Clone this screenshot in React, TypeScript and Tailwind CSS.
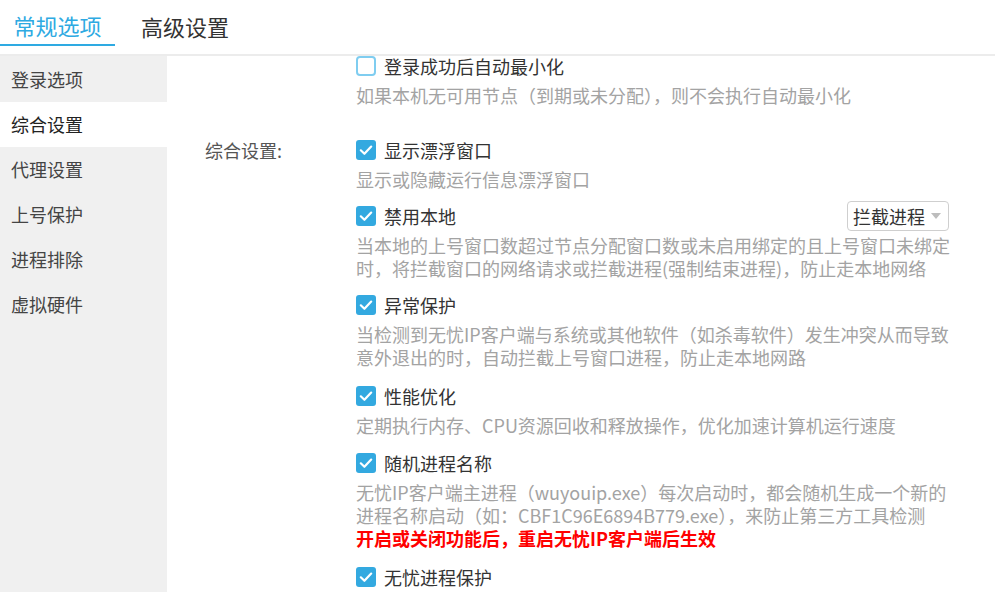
import React from "react";

const FONT = { fontFamily: '"Noto Sans CJK SC", "Noto Sans", sans-serif' };

function Check({ checked }: { checked: boolean }) {
  if (!checked) {
    return (
      <div className="w-[20px] h-[20px] shrink-0 rounded-[4px] border-2 border-[#7fcdf0] bg-white" />
    );
  }
  return (
    <div className="w-[20px] h-[20px] shrink-0 rounded-[3px] bg-[#33a9e0] flex items-center justify-center">
      <svg width="20" height="20" viewBox="0 0 20 20">
        <polyline
          points="4.8,10.3 8.4,13.8 15.2,6.6"
          fill="none"
          stroke="#ffffff"
          strokeWidth="2.2"
          strokeLinecap="round"
          strokeLinejoin="round"
        />
      </svg>
    </div>
  );
}

type Item = {
  title: string;
  checked: boolean;
  desc: React.ReactNode[];
  dropdown?: boolean;
  mb?: string;
};

function Option({ item }: { item: Item }) {
  return (
    <div className={item.mb ?? "mb-[11px]"}>
      <div className="h-[28px] flex items-center">
        <Check checked={item.checked} />
        <span className="ml-[8px] text-[18px] text-[#333] leading-none">{item.title}</span>
        {item.dropdown && (
          <div className="ml-auto mr-[1px] h-[30px] w-[102px] shrink-0 rounded-[4px] border border-[#cfcfcf] bg-white flex items-center pl-[5px]">
            <span className="text-[18px] text-[#333] leading-none">拦截进程</span>
            <svg className="ml-[6px]" width="10" height="6" viewBox="0 0 10 6">
              <polygon points="0,0 10,0 5,6" fill="#bdbdbd" />
            </svg>
          </div>
        )}
      </div>
      <div className="mt-[4px] text-[18px] leading-[23px] text-[#a3a3a3]">
        {item.desc.map((d, i) => (
          <div key={i} className="whitespace-nowrap">
            {d}
          </div>
        ))}
      </div>
    </div>
  );
}

export default function App() {
  const items: Item[] = [
    {
      title: "显示漂浮窗口",
      checked: true,
      desc: ["显示或隐藏运行信息漂浮窗口"],
    },
    {
      title: "禁用本地",
      checked: true,
      dropdown: true,
      desc: [
        "当本地的上号窗口数超过节点分配窗口数或未启用绑定的且上号窗口未绑定",
        "时，将拦截窗口的网络请求或拦截进程(强制结束进程)，防止走本地网络",
      ],
    },
    {
      title: "异常保护",
      checked: true,
      mb: "mb-[13px]",
      desc: [
        "当检测到无忧IP客户端与系统或其他软件（如杀毒软件）发生冲突从而导致",
        "意外退出的时，自动拦截上号窗口进程，防止走本地网路",
      ],
    },
    {
      title: "性能优化",
      checked: true,
      mb: "mb-[12px]",
      desc: ["定期执行内存、CPU资源回收和释放操作，优化加速计算机运行速度"],
    },
    {
      title: "随机进程名称",
      checked: true,
      mb: "mb-[13px]",
      desc: [
        "无忧IP客户端主进程（wuyouip.exe）每次启动时，都会随机生成一个新的",
        "进程名称启动（如：CBF1C96E6894B779.exe），来防止第三方工具检测",
        <span className="font-bold text-[#ff0000]">开启或关闭功能后，重启无忧IP客户端后生效</span>,
      ],
    },
    {
      title: "无忧进程保护",
      checked: true,
      desc: ["防止无忧IP客户端进程被其他程序结束"],
    },
  ];

  const side = ["登录选项", "综合设置", "代理设置", "上号保护", "进程排除", "虚拟硬件"];

  return (
    <div style={FONT} className="w-[995px] h-[592px] bg-white overflow-hidden flex flex-col">
      <div className="h-[56px] shrink-0 border-b-2 border-[#ececec] flex items-start">
        <div className="w-[115px] h-[46px] pt-[6px] flex items-center justify-center border-b-2 border-[#2eaae2] text-[22px] text-[#2eaae2]">
          常规选项
        </div>
        <div className="h-[46px] pt-[6px] pl-[26px] flex items-center text-[22px] text-[#333]">
          高级设置
        </div>
      </div>
      <div className="flex flex-1 min-h-0">
        <div className="w-[167px] shrink-0 bg-[#f0f0f0] pt-[1px]">
          {side.map((s, i) => (
            <div
              key={s}
              className={
                i === 1
                  ? "h-[45px] flex items-center pl-[11px] text-[18px] text-[#222] bg-white"
                  : "h-[45px] flex items-center pl-[11px] text-[18px] text-[#444]"
              }
            >
              {s}
            </div>
          ))}
        </div>
        <div className="flex-1 min-w-0 overflow-hidden">
          <div className="-mt-[4px]">
            <div className="flex">
              <div className="w-[189px] shrink-0" />
              <div className="w-[594px]">
                <Option
                  item={{
                    title: "登录成功后自动最小化",
                    checked: false,
                    desc: ["如果本机无可用节点（到期或未分配），则不会执行自动最小化"],
                  }}
                />
              </div>
            </div>
            <div className="flex mt-[18px]">
              <div className="w-[189px] shrink-0 pl-[38px]">
                <div className="h-[28px] flex items-center text-[18px] text-[#555]">综合设置:</div>
              </div>
              <div className="w-[594px]">
                {items.map((it) => (
                  <Option key={it.title} item={it} />
                ))}
              </div>
            </div>
          </div>
        </div>
      </div>
    </div>
  );
}
